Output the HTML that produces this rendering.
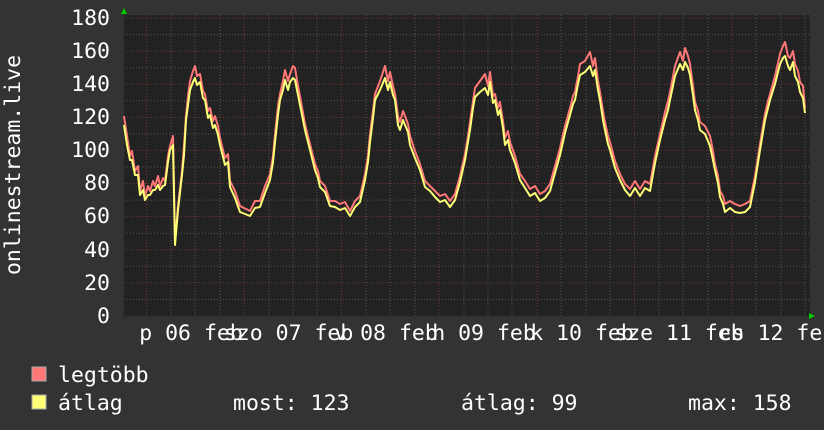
<!DOCTYPE html>
<html><head><meta charset="utf-8"><style>
body{margin:0;background:#333;}
svg{display:block}
text{font-family:"DejaVu Sans Mono","Liberation Mono",monospace;fill:#fff;font-size:21.5px}
</style></head><body>
<svg width="824" height="430" xmlns="http://www.w3.org/2000/svg">
<rect width="824" height="430" fill="#333"/>
<rect x="124" y="15" width="686" height="301" fill="#222"/>
<g id="grid" stroke-width="1" fill="none">
<g stroke="#555" stroke-dasharray="1,2">
<line x1="124" x2="810" y1="299.4" y2="299.4"/><line x1="124" x2="810" y1="266.3" y2="266.3"/>
<line x1="124" x2="810" y1="233.2" y2="233.2"/><line x1="124" x2="810" y1="200.1" y2="200.1"/>
<line x1="124" x2="810" y1="167" y2="167"/><line x1="124" x2="810" y1="133.9" y2="133.9"/>
<line x1="124" x2="810" y1="100.8" y2="100.8"/><line x1="124" x2="810" y1="67.7" y2="67.7"/>
<line x1="124" x2="810" y1="34.6" y2="34.6"/>
<line x1="171" x2="171" y1="15" y2="316"/><line x1="195" x2="195" y1="15" y2="316"/><line x1="220" x2="220" y1="15" y2="316"/>
<line x1="269" x2="269" y1="15" y2="316"/><line x1="293" x2="293" y1="15" y2="316"/><line x1="317" x2="317" y1="15" y2="316"/>
<line x1="366" x2="366" y1="15" y2="316"/><line x1="390" x2="390" y1="15" y2="316"/><line x1="415" x2="415" y1="15" y2="316"/>
<line x1="464" x2="464" y1="15" y2="316"/><line x1="488" x2="488" y1="15" y2="316"/><line x1="512" x2="512" y1="15" y2="316"/>
<line x1="561" x2="561" y1="15" y2="316"/><line x1="586" x2="586" y1="15" y2="316"/><line x1="610" x2="610" y1="15" y2="316"/>
<line x1="659" x2="659" y1="15" y2="316"/><line x1="683" x2="683" y1="15" y2="316"/><line x1="708" x2="708" y1="15" y2="316"/>
<line x1="756" x2="756" y1="15" y2="316"/><line x1="781" x2="781" y1="15" y2="316"/><line x1="805" x2="805" y1="15" y2="316"/>
</g>
<g stroke="#7a3434" stroke-dasharray="1,2">
<line x1="124" x2="810" y1="282.9" y2="282.9"/><line x1="124" x2="810" y1="249.8" y2="249.8"/>
<line x1="124" x2="810" y1="216.6" y2="216.6"/><line x1="124" x2="810" y1="183.5" y2="183.5"/>
<line x1="124" x2="810" y1="150.4" y2="150.4"/><line x1="124" x2="810" y1="117.3" y2="117.3"/>
<line x1="124" x2="810" y1="84.2" y2="84.2"/><line x1="124" x2="810" y1="51.1" y2="51.1"/>
<line x1="124" x2="810" y1="18" y2="18"/>
<line x1="146.5" x2="146.5" y1="15" y2="316"/><line x1="244" x2="244" y1="15" y2="316"/><line x1="341.5" x2="341.5" y1="15" y2="316"/>
<line x1="439" x2="439" y1="15" y2="316"/><line x1="537" x2="537" y1="15" y2="316"/><line x1="634.5" x2="634.5" y1="15" y2="316"/>
<line x1="732" x2="732" y1="15" y2="316"/>
</g>
</g>
<line x1="124" x2="124" y1="12" y2="318" stroke="#2a2a2a"/>
<line x1="122" x2="812" y1="316" y2="316" stroke="#2a2a2a"/>
<polygon points="121,14 127,14 124,8" fill="#0c0"/>
<polygon points="809,313 809,319 815,316" fill="#0c0"/>
<g fill="none" stroke-width="2" stroke-linejoin="round">
<polyline stroke="#f77" transform="translate(0,-4)" points="124,120 127,140 130,160 132,155 135,175 138,170 140,195 143,185 145,200 148,190 150,195 153,185 155,190 158,180 160,190 163,182 165,185 168,160 170,150 173,140 175,245 178,210 182,175 184,150 186,120 188,100 190,85 193,75 195,70 197,80 200,78 203,95 205,98 208,115 210,112 213,125 215,120 218,130 220,142 225,162 228,158 230,185 235,195 240,210 250,215 255,205 260,205 265,190 270,178 273,160 275,138 278,110 280,98 283,85 285,74 288,85 290,78 293,70 295,72 298,90 300,100 305,128 310,148 313,160 315,168 318,175 320,185 325,190 330,205 335,205 340,208 345,206 350,215 355,205 360,200 365,178 368,160 370,138 373,115 375,98 380,85 385,70 388,85 390,76 393,90 395,98 398,120 400,126 403,115 405,120 408,128 410,140 415,155 420,168 425,185 430,190 435,195 440,200 445,198 450,205 455,198 460,180 465,158 468,140 470,126 473,105 475,92 480,85 485,78 488,90 490,76 493,100 495,98 498,112 500,106 503,125 505,142 508,135 510,146 515,160 520,178 525,185 530,193 535,190 540,198 545,195 550,188 555,170 560,152 565,130 570,112 573,100 575,96 578,80 580,68 585,65 590,56 593,70 595,62 598,85 600,96 603,115 605,126 608,140 610,146 615,165 620,178 625,188 630,193 635,185 640,193 645,185 650,188 655,160 660,138 663,125 665,116 668,105 670,96 675,70 680,56 683,65 685,52 688,60 690,68 693,90 695,106 698,115 700,126 705,130 710,140 713,155 715,168 718,180 720,195 723,200 725,208 730,205 735,208 740,210 745,208 750,205 755,180 760,148 763,130 765,118 768,105 770,98 775,80 780,58 783,50 785,46 788,60 790,62 793,55 795,68 798,75 800,86 803,90 805,112"/>
<polyline stroke="#ff7" points="124,125 127,145 130,160 132,160 135,175 138,175 140,195 143,190 145,200 148,195 150,195 153,190 155,190 158,185 160,190 163,186 165,185 168,162 170,150 173,145 175,245 178,210 182,175 184,155 186,120 188,105 190,90 193,82 195,78 197,85 200,82 203,98 205,100 208,118 210,115 213,128 215,125 218,135 220,145 225,165 228,162 230,187 235,198 240,212 250,216 255,208 260,207 265,193 270,180 273,162 275,142 278,115 280,100 283,90 285,80 288,90 290,82 293,78 295,80 298,95 300,105 305,130 310,150 313,162 315,170 318,178 320,187 325,192 330,206 335,207 340,210 345,208 350,216 355,207 360,202 365,180 368,162 370,142 373,118 375,100 380,90 385,78 388,90 390,82 393,95 395,100 398,125 400,130 403,120 405,125 408,132 410,145 415,158 420,170 425,187 430,191 435,197 440,202 445,200 450,207 455,200 460,182 465,160 468,142 470,130 473,108 475,97 480,92 485,88 488,95 490,82 493,103 495,100 498,115 500,110 503,128 505,145 508,140 510,150 515,163 520,180 525,188 530,196 535,193 540,201 545,198 550,191 555,173 560,155 565,133 570,115 573,104 575,100 578,84 580,75 585,72 590,66 593,76 595,70 598,90 600,100 603,120 605,130 608,144 610,150 615,168 620,180 625,190 630,196 635,188 640,196 645,188 650,191 655,163 660,140 663,128 665,120 668,110 670,100 675,76 680,64 683,70 685,62 688,68 690,75 693,95 695,110 698,120 700,130 705,134 710,146 713,160 715,170 718,183 720,197 723,204 725,212 730,208 735,212 740,213 745,212 750,207 755,182 760,150 763,132 765,120 768,108 770,100 775,84 780,64 783,58 785,56 788,66 790,70 793,62 795,76 798,82 800,92 803,98 805,113"/>
</g>
<g text-anchor="end">
<text x="110" y="25">180</text><text x="110" y="58">160</text><text x="110" y="91">140</text>
<text x="110" y="124">120</text><text x="110" y="157">100</text><text x="110" y="190">80</text>
<text x="110" y="223">60</text><text x="110" y="257">40</text><text x="110" y="290">20</text>
<text x="110" y="323">0</text>
</g>
<text transform="translate(20,165) rotate(-90)" text-anchor="middle">onlinestream.live</text>
<g text-anchor="middle">
<text x="191" y="340">p 06 feb</text><text x="288.6" y="340">szo 07 feb</text>
<text x="386" y="340">v 08 feb</text><text x="484" y="340">h 09 feb</text>
<text x="582" y="340">k 10 feb</text><text x="679" y="340">sze 11 feb</text>
<text x="777" y="340">cs 12 feb</text>
</g>
<rect x="32" y="367" width="14" height="14" fill="#f77" stroke="#aaa" stroke-width="1"/>
<rect x="32" y="395" width="14" height="14" fill="#ff7" stroke="#aaa" stroke-width="1"/>
<text x="58" y="382">legtöbb</text>
<text x="58" y="410">átlag</text>
<text x="233" y="410">most: 123</text>
<text x="461" y="410">átlag: 99</text>
<text x="688" y="410">max: 158</text>
</svg>
</body></html>
